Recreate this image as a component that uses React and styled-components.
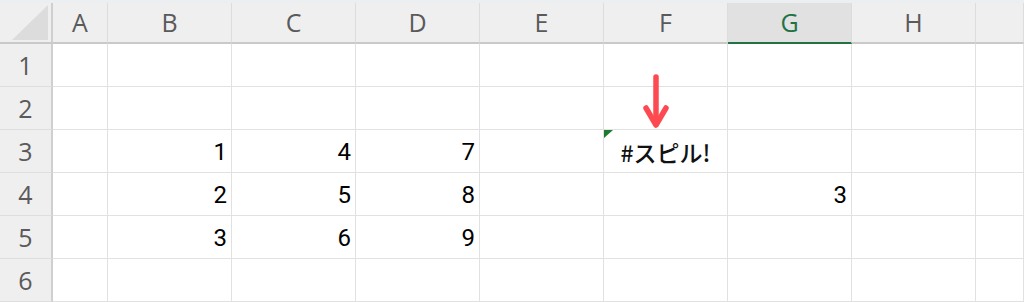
import React from "react";
import styled, { createGlobalStyle, css } from "styled-components";

const Global = createGlobalStyle`
  html, body { margin: 0; padding: 0; background: #ffffff; overflow: hidden; }
  #root { width: 1024px; height: 302px; }
`;

const Sheet = styled.div`
  width: 1024px;
  height: 302px;
  display: flex;
  flex-direction: column;
  background: #ffffff;
`;

const TopStrip = styled.div`
  height: 3px;
  background: #eceff2;
  flex: none;
`;

const Grid = styled.div`
  display: grid;
  grid-template-columns: 53px 55px repeat(7, 124px) 1fr;
  grid-template-rows: 41px repeat(6, 43px);
`;

const Corner = styled.div`
  box-sizing: border-box;
  background: #efefef;
  border-right: 2px solid #cfcfcf;
  border-bottom: 2px solid #c9c9c9;
  display: flex;
  justify-content: flex-end;
  align-items: flex-end;
  padding: 0 3px 2px 0;
`;

const CornerTriangle = styled.div`
  width: 36px;
  height: 35px;
  background: #dcdcdc;
  clip-path: polygon(100% 0, 100% 100%, 0 100%);
`;

const ColHeader = styled.div`
  box-sizing: border-box;
  background: ${(p) => (p.$selected ? "#e1e1e1" : "#efefef")};
  border-right: 1px solid #dcdcdc;
  border-bottom: 2px solid ${(p) => (p.$selected ? "#217346" : "#c9c9c9")};
  display: flex;
  align-items: center;
  justify-content: center;
  font-family: "Open Sans", "Noto Sans", sans-serif;
  font-size: 25px;
  font-weight: 400;
  color: ${(p) => (p.$selected ? "#217346" : "#5a5a5a")};
  padding-bottom: 2px;
`;

const RowHeader = styled.div`
  box-sizing: border-box;
  background: #efefef;
  border-right: 2px solid #cfcfcf;
  border-bottom: 1px solid #dedede;
  display: flex;
  align-items: center;
  justify-content: center;
  font-family: "Open Sans", "Noto Sans", sans-serif;
  font-size: 25px;
  color: #5a5a5a;
`;

const Cell = styled.div`
  position: relative;
  box-sizing: border-box;
  border-right: 1px solid #e1e1e1;
  border-bottom: 1px solid #e1e1e1;
  display: flex;
  align-items: center;
  justify-content: ${(p) =>
    p.$align === "center" ? "center" : p.$align === "right" ? "flex-end" : "flex-start"};
  padding: 2px 4px 0 4px;
  font-family: Roboto, "Liberation Sans", Arial, sans-serif;
  font-size: 24px;
  font-weight: 400;
  color: #000000;
  ${(p) =>
    p.$error &&
    css`
      font-family: "Noto Sans CJK JP", "Noto Sans", sans-serif;
      font-size: 23px;
      font-weight: 500;
      color: #111111;
      padding-left: 0;
      padding-right: 0;
    `}
`;

const ErrorFlag = styled.span`
  position: absolute;
  left: 0;
  top: 0;
  width: 9px;
  height: 8px;
  background: #1e7a30;
  clip-path: polygon(0 0, 100% 0, 0 100%);
`;

const ArrowMark = styled.svg`
  position: absolute;
  left: 39px;
  top: -56px;
  overflow: visible;
`;

const Arrow = () => (
  <ArrowMark width="26" height="56" viewBox="0 0 26 56">
    <line x1="13" y1="3" x2="13" y2="50" stroke="#fd4a50" strokeWidth="5.5" strokeLinecap="round" />
    <polyline
      points="3,34 13,51 23,34"
      fill="none"
      stroke="#fd4a50"
      strokeWidth="5.5"
      strokeLinecap="round"
      strokeLinejoin="round"
    />
  </ArrowMark>
);

const columns = ["A", "B", "C", "D", "E", "F", "G", "H", ""];
const selectedCol = "G";

const data = {
  3: { B: "1", C: "4", D: "7", F: "#スピル!" },
  4: { B: "2", C: "5", D: "8", G: "3" },
  5: { B: "3", C: "6", D: "9" },
};

export default function App() {
  const rows = [1, 2, 3, 4, 5, 6];
  return (
    <>
      <Global />
      <Sheet>
        <TopStrip />
        <Grid>
          <Corner>
            <CornerTriangle />
          </Corner>
          {columns.map((c, i) => (
            <ColHeader key={"h" + i} $selected={c === selectedCol}>
              {c}
            </ColHeader>
          ))}
          {rows.map((r) => (
            <React.Fragment key={r}>
              <RowHeader>{r}</RowHeader>
              {columns.map((c, i) => {
                const v = (data[r] && data[r][c]) || "";
                const isError = v.startsWith("#");
                return (
                  <Cell
                    key={r + "-" + i}
                    $align={isError ? "center" : "right"}
                    $error={isError}
                  >
                    {isError && <ErrorFlag />}
                    {isError && <Arrow />}
                    {v}
                  </Cell>
                );
              })}
            </React.Fragment>
          ))}
        </Grid>
      </Sheet>
    </>
  );
}
